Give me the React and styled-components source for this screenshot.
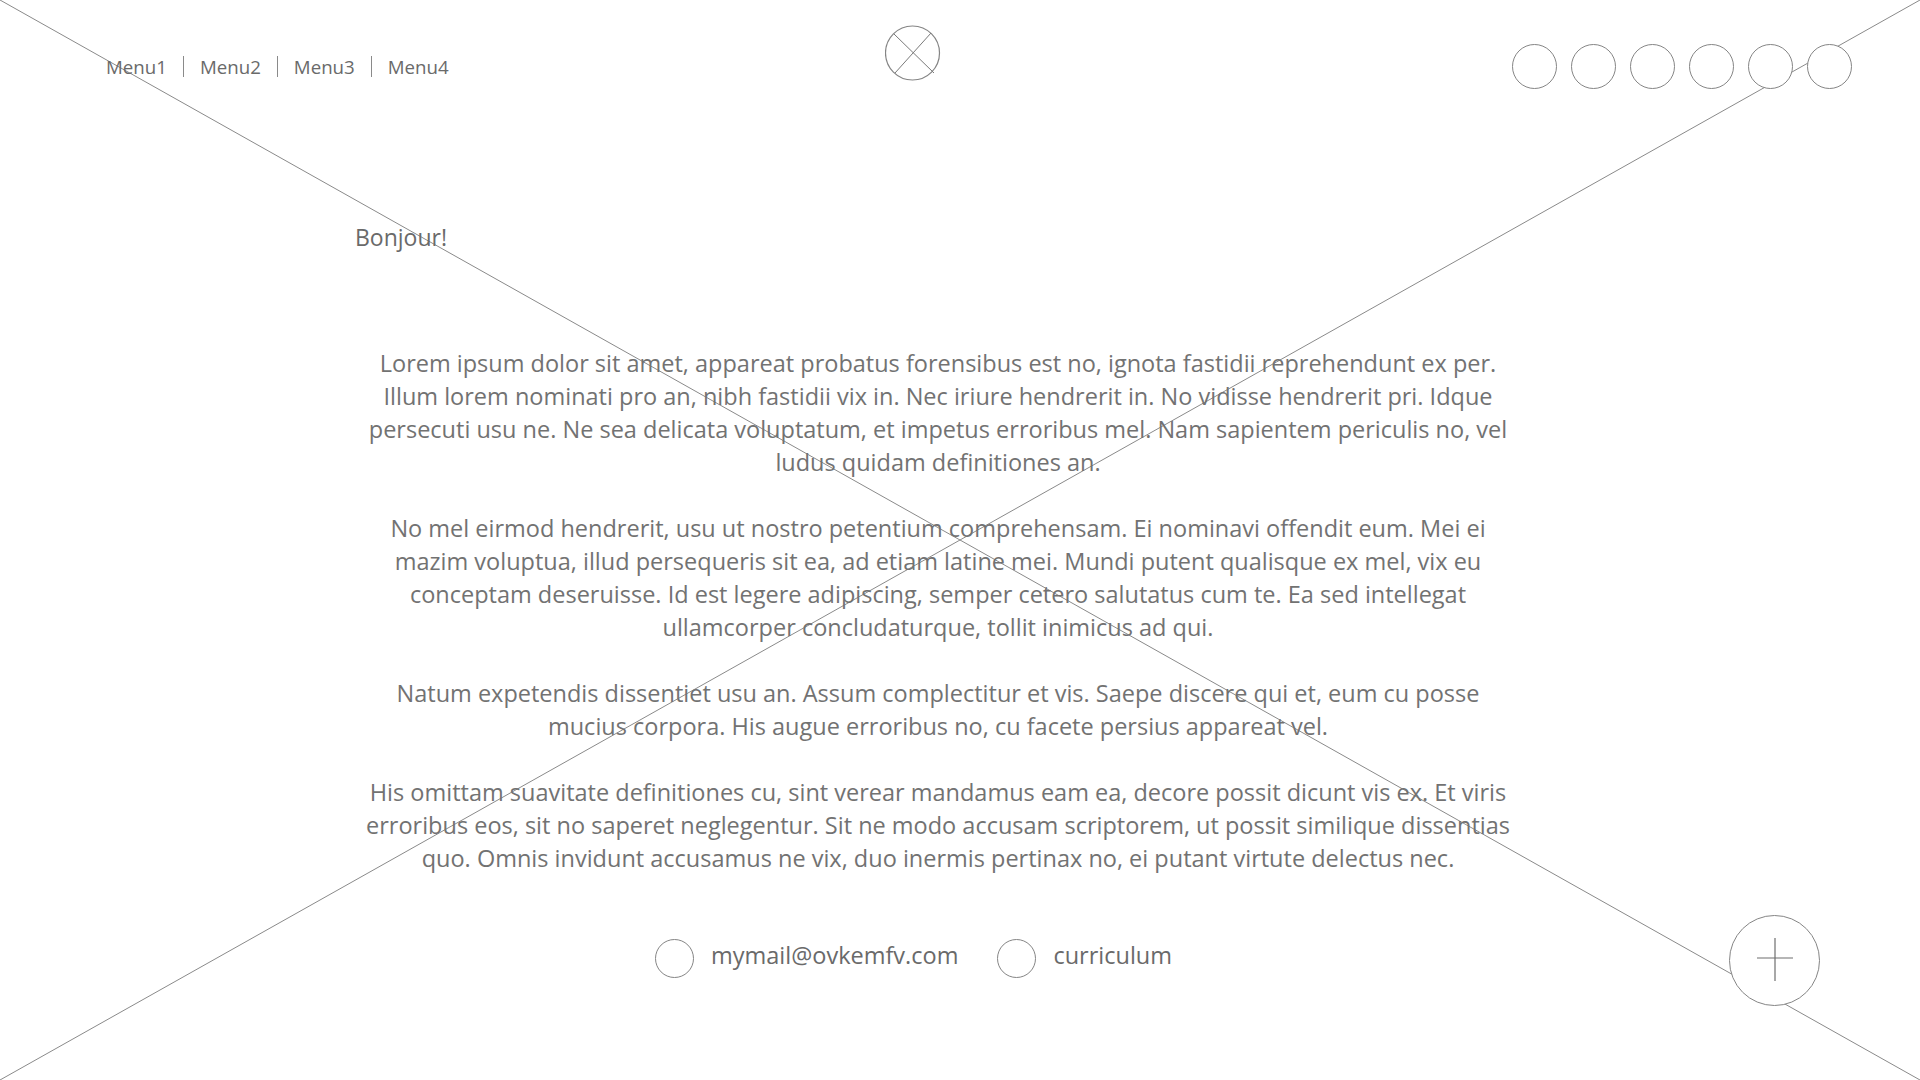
import React from "react";
import styled, { createGlobalStyle } from "styled-components";

const GlobalStyle = createGlobalStyle`
  html, body { margin: 0; padding: 0; background: #ffffff; }
  body { font-family: "Open Sans", "Noto Sans", sans-serif; color: #6e6e6e; }
  * { box-sizing: border-box; }
`;

const Page = styled.div`
  position: relative;
  width: 1920px;
  height: 1080px;
  overflow: hidden;
  background: #ffffff;
`;

const Cross = styled.svg`
  position: absolute;
  inset: 0;
  width: 1920px;
  height: 1080px;
  z-index: 0;
  pointer-events: none;
`;

const Layer = styled.div`
  position: relative;
  z-index: 1;
  display: flex;
  flex-direction: column;
`;

const Header = styled.header`
  display: flex;
  align-items: flex-start;
  height: 110px;
  padding: 25px 68px 0 106px;
`;

const Menu = styled.nav`
  display: flex;
  align-items: center;
  margin-top: 31px;
  height: 21px;
`;

const MenuItem = styled.a`
  font-size: 18.7px;
  line-height: 21px;
  color: #6a6a6a;
  text-decoration: none;
  padding: 0 16px;
  border-left: ${(p) => (p.$first ? "none" : "1px solid #8a8a8a")};
  &:first-child { padding-left: 0; }
  &:last-child { padding-right: 0; }
`;

const Logo = styled.svg`
  width: 56px;
  height: 56px;
  margin-left: 436px;
`;

const Socials = styled.div`
  display: flex;
  gap: 14px;
  margin-left: auto;
  margin-top: 19px;
`;

const Dot = styled.span`
  display: block;
  width: 45px;
  height: 45px;
  border-radius: 50%;
  border: 1.2px solid #858585;
  background: #ffffff;
`;

const Main = styled.main`
  padding-left: 355px;
  width: 1521px;
`;

const Greeting = styled.h1`
  margin: 111px 0 0 0;
  font-size: 23px;
  line-height: 32px;
  font-weight: 400;
  color: #6a6a6a;
`;

const Body = styled.div`
  margin-top: 94px;
  padding: 0 3px;
  text-align: center;
`;

const Para = styled.p`
  margin: 0 0 33px 0;
  font-size: 23.5px;
  line-height: 33px;
  color: #727272;
  &:last-child { margin-bottom: 0; }
`;

const Footer = styled.footer`
  display: flex;
  align-items: center;
  height: 90px;
  margin-top: 40px;
  padding: 0 100px 0 655px;
`;

const Links = styled.div`
  display: flex;
  align-items: center;
  gap: 39px;
  margin-bottom: 11px;
`;

const LinkItem = styled.a`
  display: flex;
  align-items: center;
  gap: 17px;
  font-size: 23.5px;
  line-height: 32px;
  color: #6a6a6a;
  text-decoration: none;
`;

const LinkDot = styled.span`
  display: block;
  width: 39px;
  height: 39px;
  border-radius: 50%;
  border: 1px solid #858585;
  background: #ffffff;
  margin-top: 7px;
`;

const Fab = styled.button`
  margin-left: auto;
  width: 91px;
  height: 91px;
  border-radius: 50%;
  border: 1.2px solid #858585;
  background: #ffffff;
  padding: 0;
  display: flex;
  align-items: center;
  justify-content: center;
  cursor: pointer;
`;

const paragraphs = [
  "Lorem ipsum dolor sit amet, appareat probatus forensibus est no, ignota fastidii reprehendunt ex per. Illum lorem nominati pro an, nibh fastidii vix in. Nec iriure hendrerit in. No vidisse hendrerit pri. Idque persecuti usu ne. Ne sea delicata voluptatum, et impetus erroribus mel. Nam sapientem periculis no, vel ludus quidam definitiones an.",
  "No mel eirmod hendrerit, usu ut nostro petentium comprehensam. Ei nominavi offendit eum. Mei ei mazim voluptua, illud persequeris sit ea, ad etiam latine mei. Mundi putent qualisque ex mel, vix eu conceptam deseruisse. Id est legere adipiscing, semper cetero salutatus cum te. Ea sed intellegat ullamcorper concludaturque, tollit inimicus ad qui.",
  "Natum expetendis dissentiet usu an. Assum complectitur et vis. Saepe discere qui et, eum cu posse mucius corpora. His augue erroribus no, cu facete persius appareat vel.",
  "His omittam suavitate definitiones cu, sint verear mandamus eam ea, decore possit dicunt vis ex. Et viris erroribus eos, sit no saperet neglegentur. Sit ne modo accusam scriptorem, ut possit similique dissentias quo. Omnis invidunt accusamus ne vix, duo inermis pertinax no, ei putant virtute delectus nec.",
];

export default function App() {
  return (
    <Page>
      <GlobalStyle />
      <Cross viewBox="0 0 1920 1080" preserveAspectRatio="none">
        <line x1="0" y1="0" x2="1920" y2="1080" stroke="#8a8a8a" strokeWidth="1" />
        <line x1="1920" y1="0" x2="0" y2="1080" stroke="#8a8a8a" strokeWidth="1" />
      </Cross>
      <Layer>
        <Header>
          <Menu>
            {["Menu1", "Menu2", "Menu3", "Menu4"].map((m, i) => (
              <MenuItem key={m} href="#" $first={i === 0}>
                {m}
              </MenuItem>
            ))}
          </Menu>
          <Logo viewBox="0 0 56 56">
            <circle cx="27.5" cy="28" r="27" fill="#ffffff" stroke="#858585" strokeWidth="1.2" />
            <line x1="9" y1="9" x2="49" y2="48" stroke="#7a7a7a" strokeWidth="1" />
            <line x1="46" y1="8" x2="10" y2="48" stroke="#7a7a7a" strokeWidth="1" />
          </Logo>
          <Socials>
            {[0, 1, 2, 3, 4, 5].map((i) => (
              <Dot key={i} />
            ))}
          </Socials>
        </Header>
        <Main>
          <Greeting>Bonjour!</Greeting>
          <Body>
            {paragraphs.map((p, i) => (
              <Para key={i}>{p}</Para>
            ))}
          </Body>
        </Main>
        <Footer>
          <Links>
            <LinkItem href="#">
              <LinkDot />
              mymail@ovkemfv.com
            </LinkItem>
            <LinkItem href="#">
              <LinkDot />
              curriculum
            </LinkItem>
          </Links>
          <Fab aria-label="add">
            <svg width="44" height="44" viewBox="0 0 44 44">
              <line x1="4" y1="20" x2="40" y2="20" stroke="#6e6e6e" strokeWidth="1.2" />
              <line x1="22" y1="0" x2="22" y2="43" stroke="#6e6e6e" strokeWidth="1.2" />
            </svg>
          </Fab>
        </Footer>
      </Layer>
    </Page>
  );
}
